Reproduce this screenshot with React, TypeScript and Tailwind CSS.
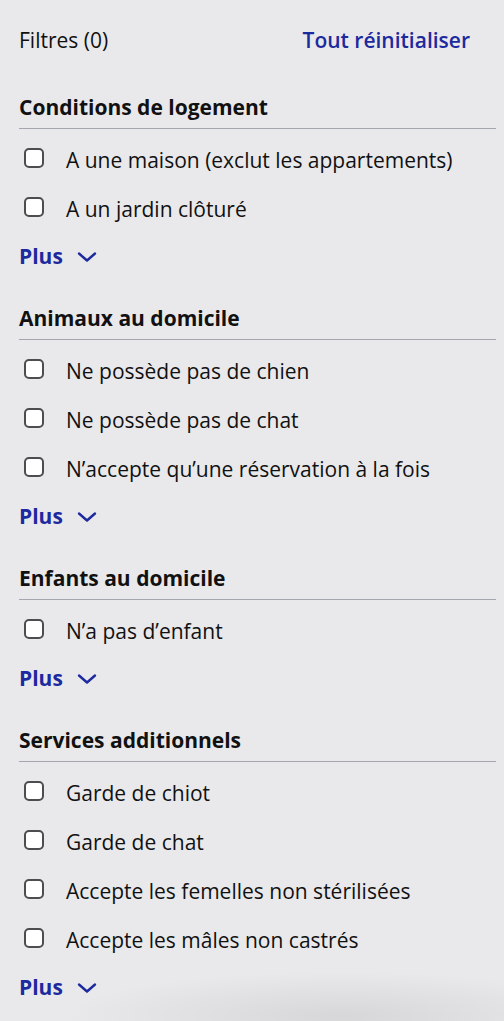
import React from "react";

type Section = {
  title: string;
  options: string[];
};

const sections: Section[] = [
  {
    title: "Conditions de logement",
    options: ["A une maison (exclut les appartements)", "A un jardin clôturé"],
  },
  {
    title: "Animaux au domicile",
    options: [
      "Ne possède pas de chien",
      "Ne possède pas de chat",
      "N’accepte qu’une réservation à la fois",
    ],
  },
  {
    title: "Enfants au domicile",
    options: ["N’a pas d’enfant"],
  },
  {
    title: "Services additionnels",
    options: [
      "Garde de chiot",
      "Garde de chat",
      "Accepte les femelles non stérilisées",
      "Accepte les mâles non castrés",
    ],
  },
];

function Chevron() {
  return (
    <svg width="20" height="12" viewBox="0 0 20 12" fill="none" aria-hidden>
      <path
        d="M2 2.5l8 7 8-7"
        stroke="currentColor"
        strokeWidth="2.4"
        strokeLinecap="round"
        strokeLinejoin="round"
      />
    </svg>
  );
}

function FilterSection({ section, first }: { section: Section; first: boolean }) {
  return (
    <section className={first ? "mt-[41px]" : "mt-[35px]"}>
      <h2 className="text-[21px] font-bold leading-[28px] text-[#111]">
        {section.title}
      </h2>
      <div className="mt-[7px] h-px bg-[#a3a6ad]" />
      <ul className="mt-[6px]">
        {section.options.map((label) => (
          <li key={label} className="flex h-[49px] items-center">
            <span className="-mt-[4px] ml-[5px] h-[20px] w-[20px] shrink-0 rounded-[5px] border-2 border-[#4d4d4f] bg-white" />
            <span className="ml-[22px] text-[21px] leading-[24px] text-[#111]">
              {label}
            </span>
          </li>
        ))}
      </ul>
      <button
        type="button"
        className="mt-[12px] flex h-[24px] items-center gap-[14px] text-[21px] font-bold text-[#1d2a9e]"
      >
        Plus
        <Chevron />
      </button>
    </section>
  );
}

export default function App() {
  return (
    <div
      className="relative min-h-[1021px] w-[504px] overflow-hidden bg-[#e9e9eb] pl-[19px] pr-[8px] pt-[28px]"
      style={{ fontFamily: "'Open Sans', 'Noto Sans', sans-serif" }}
    >
      <header className="flex items-center justify-between pr-[26px]">
        <span className="text-[21px] leading-[24px] text-[#111]">Filtres (0)</span>
        <button type="button" className="text-[21px] font-semibold leading-[24px] text-[#1d2a9e]">
          Tout réinitialiser
        </button>
      </header>
      {sections.map((section, i) => (
        <FilterSection key={section.title} section={section} first={i === 0} />
      ))}
      <div className="pointer-events-none absolute bottom-[-40px] left-[60px] right-[-120px] h-[90px] rounded-[50%] bg-[radial-gradient(ellipse_at_center,rgba(0,0,0,0.08),rgba(0,0,0,0)_70%)]" />
    </div>
  );
}
